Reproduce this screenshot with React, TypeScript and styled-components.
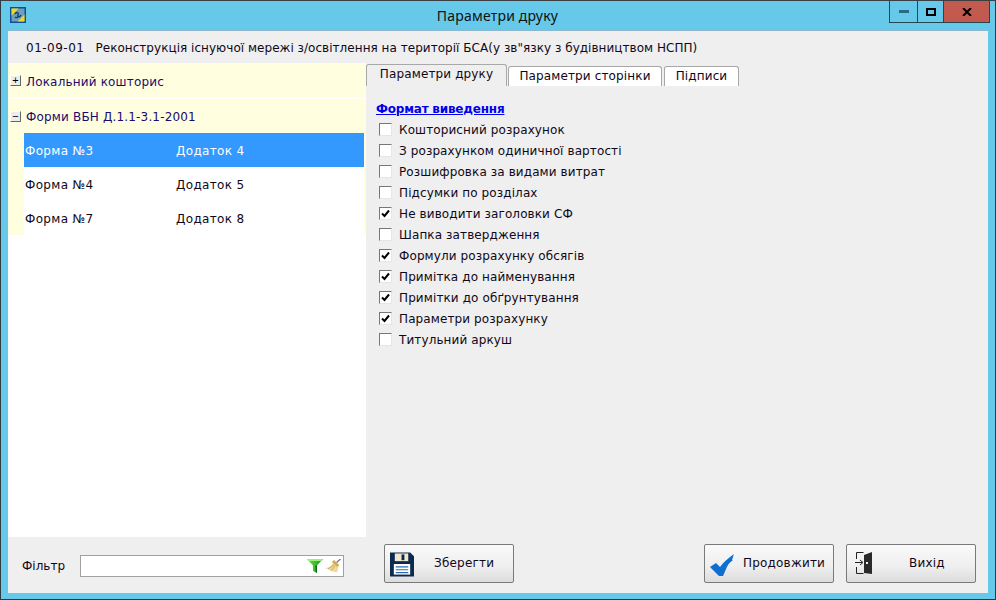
import React from "react";
import styled, { createGlobalStyle } from "styled-components";

const Global = createGlobalStyle`
  html, body { margin: 0; padding: 0; }
  body { font-family: "DejaVu Sans", Verdana, sans-serif; font-size: 12px; color: #100818; }
`;

const Win = styled.div`
  width: 996px; height: 600px; box-sizing: border-box;
  background: #66c9ea; border: 1px solid #2f3b42; border-top-color: #3a3f44;
  display: flex; flex-direction: column;
`;
const TitleBar = styled.div`
  height: 29px; flex: none; display: flex; position: relative; align-items: flex-start;
  padding-left: 9px;
`;
const AppIcon = styled.svg`width: 16px; height: 16px; margin-top: 6px; flex: none;`;
const Title = styled.div`
  position: absolute; left: 0; right: 1px; top: 5px; text-align: center;
  font-family: "Noto Sans", sans-serif; font-size: 14px; line-height: 19px; color: #111; letter-spacing: .2px;
`;
const WinButtons = styled.div`
  position: absolute; right: 5px; top: 0; height: 21px; display: flex;
  border: 1px solid #2a4552; border-top: 0;
`;
const WinBtn = styled.div<{ $w: number; $close?: boolean }>`
  width: ${p => p.$w}px; display: flex; align-items: center; justify-content: center;
  background: ${p => (p.$close ? "#c35a50" : "transparent")};
  & + & { border-left: 1px solid #2a4552; }
`;
const Body = styled.div`
  margin: 0 7px; height: 562px; background: #efefef; display: flex; flex-direction: column;
  border-top: 1px solid #8cb7cc;
`;
const InfoBar = styled.div`
  height: 32px; flex: none; box-sizing: border-box; display: flex; align-items: center;
  padding: 2px 0 0 18px; gap: 11px; white-space: pre; letter-spacing: .035px;
`;
const Code = styled.span`letter-spacing: .5px;`;
const Main = styled.div`flex: 1; display: flex; min-height: 0;`;
const Left = styled.div`width: 358px; flex: none; display: flex; flex-direction: column;`;
const Tree = styled.div`height: 474px; flex: none; background: #fff; display: flex; flex-direction: column;`;
const GroupRow = styled.div`
  flex: none; height: 34px; box-sizing: border-box; background: #ffffdf; display: flex; align-items: center; color: #1c0a6e;
  padding: 2px 0 0 2px; gap: 5px; letter-spacing: .17px;
  &:first-child { height: 35px; margin-bottom: 1px; }
`;
const Expander = styled.div`
  width: 11px; height: 11px; box-sizing: border-box; background: #ededed; margin-top: -2px;
  border-right: 1px solid #666; border-bottom: 1px solid #666; border-top: 1px solid #fff; border-left: 1px solid #fff;
  display: flex; align-items: center; justify-content: center; font-size: 11px; line-height: 9px;
  color: #000; font-family: "Liberation Sans", sans-serif; letter-spacing: 0;
`;
const SubRows = styled.div`background: #ffffdf; padding-left: 16px; width: 100%; box-sizing: border-box;`;
const SubRow = styled.div<{ $sel?: boolean }>`
  height: 34px; box-sizing: border-box; padding-top: 2px; display: flex; align-items: center; width: 340px;
  background: ${p => (p.$sel ? "#3399ff" : "#fff")};
  color: ${p => (p.$sel ? "#fff" : "#100818")};
  letter-spacing: .35px;
`;
const FormName = styled.span`width: 152px; padding-left: 1px; box-sizing: border-box;`;
const FilterBar = styled.div`
  flex: 1; display: flex; align-items: center; padding: 1px 0 0 14px; gap: 15px;
`;
const FilterBox = styled.div`
  width: 264px; height: 22px; box-sizing: border-box; background: #fff; border: 1px solid #a0a0a0;
  display: flex; align-items: center; justify-content: flex-end; gap: 2px; padding-right: 2px;
`;
const Right = styled.div`flex: 1; display: flex; flex-direction: column; min-width: 0;`;
const Tabs = styled.div`display: flex; align-items: flex-end; height: 23px;`;
const Tab = styled.div<{ $active?: boolean; $w: number; $gap: number }>`
  width: ${p => p.$w}px; height: ${p => (p.$active ? 22 : 20)}px; box-sizing: border-box;
  border: 1px solid #a8a8a8; border-bottom: 0; border-radius: 3px 3px 0 0;
  background: ${p => (p.$active ? "#efefef" : "#fff")};
  display: flex; align-items: center; justify-content: center;
  padding-bottom: ${p => (p.$active ? 3 : 1)}px;
  margin-right: ${p => p.$gap}px; letter-spacing: .13px;
`;
const TabPage = styled.div`flex: 1; display: flex; flex-direction: column; padding: 16px 0 0 10px;`;
const Heading = styled.div`
  color: #0000ee; font-weight: bold; text-decoration: underline; line-height: 14px; margin-bottom: 3px; letter-spacing: -.2px;
`;
const Options = styled.div`display: flex; flex-direction: column; padding-left: 3px;`;
const Option = styled.div`height: 21px; display: flex; align-items: center; gap: 7px; letter-spacing: .11px;`;
const Check = styled.div`
  width: 11px; height: 11px; background: #fff; border: 1px solid #777; border-right-color: #e6e6e6; border-bottom-color: #e6e6e6;
  display: flex; align-items: center; justify-content: center; flex: none;
`;
const Spacer = styled.div`flex: 1;`;
const Buttons = styled.div`height: 55px; box-sizing: border-box; flex: none; display: flex; padding: 6px 12px 0 18px; gap: 12px;`;
const Btn = styled.div<{ $w: number }>`
  width: ${p => p.$w}px; height: 39px; box-sizing: border-box; position: relative;
  border: 1px solid #7a7a7a; border-radius: 2px;
  background: linear-gradient(#fafafa, #eeeeee 60%, #dcdcdc);
  display: flex; align-items: center;
`;
const BtnIcon = styled.svg<{ $left: number; $top: number }>`position: absolute; left: ${p => p.$left}px; top: ${p => p.$top}px;`;
const BtnLabel = styled.span<{ $left: number }>`position: absolute; left: ${p => p.$left}px; top: 11px; line-height: 15px; letter-spacing: .2px;`;
const BtnGap = styled.div`flex: 1;`;

const Tick = () => (
  <svg width="9" height="9" viewBox="0 0 9 9"><path d="M1 4.5l2.5 2.5L8 1.5" fill="none" stroke="#000" strokeWidth="2" /></svg>
);

const opts: [string, boolean][] = [
  ["Кошторисний розрахунок", false],
  ["З розрахунком одиничної вартості", false],
  ["Розшифровка за видами витрат", false],
  ["Підсумки по розділах", false],
  ["Не виводити заголовки СФ", true],
  ["Шапка затвердження", false],
  ["Формули розрахунку обсягів", true],
  ["Примітка до найменування", true],
  ["Примітки до обґрунтування", true],
  ["Параметри розрахунку", true],
  ["Титульний аркуш", false],
];

export default function App() {
  return (
    <>
      <Global />
      <Win>
        <TitleBar>
          <AppIcon viewBox="0 0 16 16">
            <rect width="16" height="16" fill="#0a4fa0" />
            <rect x="1.5" y="1.5" width="13" height="13" fill="#6fa0b8" />
            <path d="M1.5 1.5h7l-7 7z M14.5 14.5h-7l7-7z" fill="#f0d81c" />
            <path d="M5 7c2-3 4-1 3 1s1 3 3 0M5 10c1 1 3 1 3-1" fill="none" stroke="#123a80" strokeWidth="1.4" />
          </AppIcon>
          <Title>Параметри друку</Title>
          <WinButtons>
            <WinBtn $w={27}><svg width="10" height="3"><rect width="10" height="3" fill="#2a6a85" /></svg></WinBtn>
            <WinBtn $w={25}><svg width="10" height="8"><rect x="1" y="1" width="8" height="6" fill="none" stroke="#000" strokeWidth="2" /></svg></WinBtn>
            <WinBtn $w={45} $close><svg width="10" height="8" viewBox="0 0 10 8"><path d="M1 0l8 8M9 0l-8 8" stroke="#000" strokeWidth="2" /></svg></WinBtn>
          </WinButtons>
        </TitleBar>
        <Body>
          <InfoBar><Code>01-09-01</Code><span>Реконструкція існуючої мережі з/освітлення на території БСА(у зв"язку з будівництвом НСПП)</span></InfoBar>
          <Main>
            <Left>
              <Tree>
                <GroupRow><Expander>+</Expander>Локальний кошторис</GroupRow>
                <GroupRow><Expander>−</Expander>Форми ВБН Д.1.1-3.1-2001</GroupRow>
                <SubRows>
                  <SubRow $sel><FormName>Форма №3</FormName>Додаток 4</SubRow>
                  <SubRow><FormName>Форма №4</FormName>Додаток 5</SubRow>
                  <SubRow><FormName>Форма №7</FormName>Додаток 8</SubRow>
                </SubRows>
              </Tree>
              <FilterBar>
                <span>Фільтр</span>
                <FilterBox>
                  <svg width="16" height="14" viewBox="0 0 16 14">
                    <defs><linearGradient id="fg" x1="0" x2="1" y1="0" y2="0"><stop offset="0" stopColor="#6fe04f" /><stop offset="1" stopColor="#129a18" /></linearGradient></defs>
                    <path d="M0 0h16L10 6.5V14L6 12V6.5z" fill="url(#fg)" /><path d="M0 0h16l-2 2H2z" fill="#9bf07c" /><path d="M10 6.5V14l-1.5-1V6.5z" fill="#0c6a10" />
                  </svg>
                  <svg width="16" height="14" viewBox="0 0 16 14"><path d="M11 4L15.5 0" stroke="#77779a" strokeWidth="1.3" /><path d="M9 1l5 5-2 7.5-4-1-8-3.5c4 0 7-2 9-8z" fill="#f0d89a" /><path d="M9 1l5 5-2 2-5-5z" fill="#d2ad55" /><path d="M3 10l6-4M6 12l4-5" stroke="#c4a04a" strokeWidth=".8" /></svg>
                </FilterBox>
              </FilterBar>
            </Left>
            <Right>
              <Tabs>
                <Tab $active $w={141} $gap={1}>Параметри друку</Tab>
                <Tab $w={154} $gap={2}>Параметри сторінки</Tab>
                <Tab $w={75} $gap={0}>Підписи</Tab>
              </Tabs>
              <TabPage>
                <Heading>Формат виведення</Heading>
                <Options>
                  {opts.map(([t, c]) => (
                    <Option key={t}><Check>{c && <Tick />}</Check>{t}</Option>
                  ))}
                </Options>
                <Spacer />
              </TabPage>
              <Buttons>
                <Btn $w={130}>
                  <BtnIcon $left={5} $top={7} width="24" height="25" viewBox="0 0 25 25">
                    <path d="M0 0h21l4 4v21H0z" fill="#0c2a4e" />
                    <rect x="5" y="1" width="14" height="8" fill="#f3e8cf" /><rect x="12" y="2" width="3" height="6" fill="#0c2a4e" />
                    <rect x="4" y="12" width="17" height="11" fill="#fff" />
                    <path d="M6 15h13M6 18h13M6 21h13" stroke="#2a6cb0" strokeWidth="1.2" />
                  </BtnIcon>
                  <BtnLabel $left={49}>Зберегти</BtnLabel>
                </Btn>
                <BtnGap />
                <Btn $w={130}>
                  <BtnIcon $left={5} $top={9} width="24" height="22" viewBox="0 0 24 22">
                    <path d="M0 13l6-4 4 4C13 9 18 4 24 0c-1 2-1 4-2 6l1 0c-2 2-4 3-5 5-2 3-3 7-5 11H9z" fill="#0f6fd0" />
                  </BtnIcon>
                  <BtnLabel $left={38}>Продовжити</BtnLabel>
                </Btn>
                <Btn $w={130}>
                  <BtnIcon $left={8} $top={7} width="17" height="22" viewBox="0 0 17 22">
                    <path d="M1.5 7V.5h7M1.5 15v6.5h7" fill="none" stroke="#222" strokeWidth="1" />
                    <path d="M0 10.5h7M5 8l3 2.5L5 13" fill="none" stroke="#222" strokeWidth="1" />
                    <path d="M9 3l8-3v22l-8-1z" fill="#2a2a2a" /><rect x="11" y="10" width="2" height="2" fill="#eee" />
                  </BtnIcon>
                  <BtnLabel $left={62}>Вихід</BtnLabel>
                </Btn>
              </Buttons>
            </Right>
          </Main>
        </Body>
      </Win>
    </>
  );
}
